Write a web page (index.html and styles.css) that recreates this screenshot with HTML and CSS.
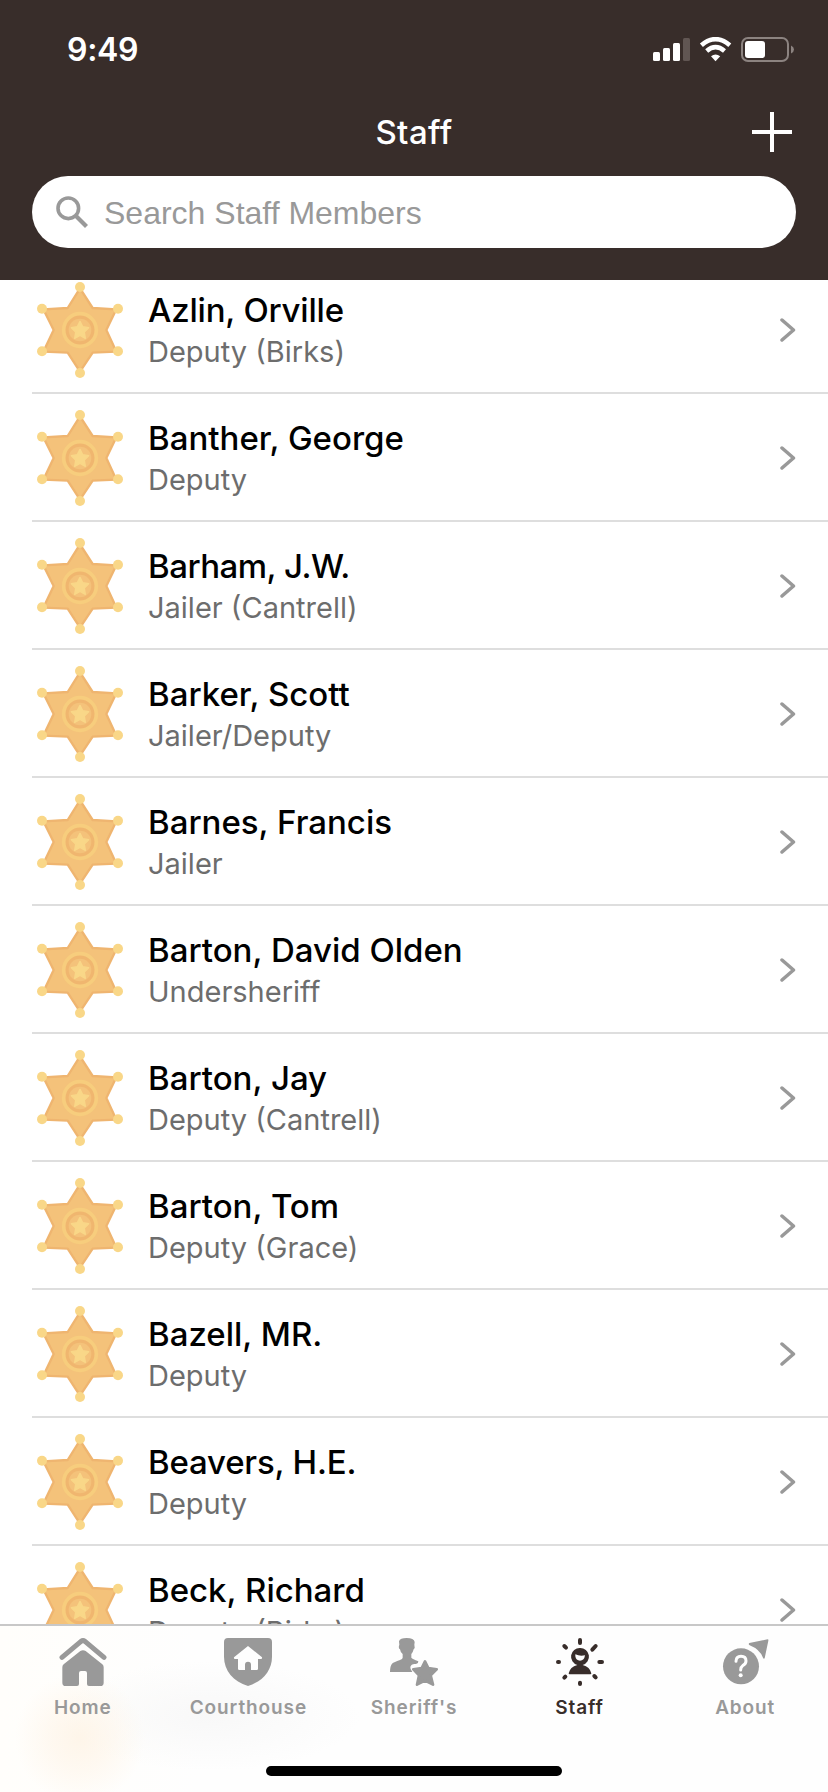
FILE: index.html
```html
<!DOCTYPE html>
<html lang="en">
<head>
<meta charset="utf-8">
<title>Staff</title>
<link rel="stylesheet" href="styles.css">
</head>
<body>
<svg class="defs" aria-hidden="true">
  <symbol id="badge" viewBox="45 15 270 300">
    <path d="M180 40 218 99 289 103 259 165 289 230 218 233 180 290 143 233 70 230 101 165 70 103 143 99Z" fill="#f4c27a" stroke="#efb570" stroke-width="7" stroke-linejoin="round"/>
    <g fill="#f9d788">
      <circle cx="180" cy="36" r="15"/><circle cx="294" cy="101" r="15"/><circle cx="294" cy="229" r="15"/>
      <circle cx="180" cy="294" r="15"/><circle cx="66" cy="229" r="15"/><circle cx="66" cy="101" r="15"/>
    </g>
    <circle cx="180" cy="165" r="49" fill="#f0b66f" stroke="#f7cd7d" stroke-width="11"/>
    <circle cx="180" cy="165" r="34" fill="#f4c27a"/>
    <path d="M180 139 188 155 206 158 193 171 196 190 180 181 164 190 167 171 154 158 172 155Z" fill="#f9d788" stroke="#f9d788" stroke-width="4" stroke-linejoin="round"/>
  </symbol>
  <symbol id="chevron" viewBox="0 0 16 26">
    <path d="M2 3 13.5 13 2 23" fill="none" stroke="#999" stroke-width="3.5" stroke-linecap="round" stroke-linejoin="round"/>
  </symbol>
</svg>
<div class="app">
  <header class="header">
    <div class="status">
      <span class="time">9:49</span>
      <svg class="status-icons" viewBox="0 0 142 26">
        <g fill="#fff">
          <rect x="0" y="15" width="7" height="9" rx="1.5"/><rect x="10" y="11" width="7" height="13" rx="1.5"/>
          <rect x="20" y="6" width="7" height="18" rx="1.5"/><rect x="30" y="1" width="7" height="23" rx="1.5" fill="#615653"/>
        </g>
        <g fill="none" stroke="#fff" stroke-width="4.6">
          <path d="M48.4 8.2Q62.5 -3.8 76.8 8.2"/><path d="M53.7 14Q62.5 6.4 71.5 14"/>
        </g>
        <path d="M58 19.3Q62.5 15.6 67.200 19.3L62.500 24.200Z" fill="#fff"/>
        <rect x="89" y="1" width="46" height="23" rx="6" fill="none" stroke="#8c8380" stroke-width="2"/>
        <rect x="92" y="4" width="20" height="17" rx="3" fill="#fff"/>
        <path d="M138 8.500Q141 10 141 12.500T138 16.500Z" fill="#8c8380"/>
      </svg>
    </div>
    <div class="titlebar">
      <h1 class="title">Staff</h1>
      <svg class="add" viewBox="0 0 40 40"><path d="M20 2V38M2 20H38" stroke="#fff" stroke-width="4" stroke-linecap="square"/></svg>
    </div>
    <div class="search">
      <svg class="search-icon" viewBox="0 0 32 32"><circle cx="12.300" cy="12.300" r="10.300" fill="none" stroke="#999" stroke-width="3.600"/><path d="M20 20 30.500 30.500" stroke="#999" stroke-width="4.200"/></svg>
      <span class="placeholder">Search Staff Members</span>
    </div>
  </header>
  <main class="list">
    <div class="row"><svg class="badge"><use href="#badge"/></svg><div class="entry"><div class="name snug">Azlin, Orville</div><div class="role">Deputy (Birks)</div></div><svg class="chevron"><use href="#chevron"/></svg></div>
    <div class="row"><svg class="badge"><use href="#badge"/></svg><div class="entry"><div class="name">Banther, George</div><div class="role">Deputy</div></div><svg class="chevron"><use href="#chevron"/></svg></div>
    <div class="row"><svg class="badge"><use href="#badge"/></svg><div class="entry"><div class="name tight">Barham, J.W.</div><div class="role">Jailer (Cantrell)</div></div><svg class="chevron"><use href="#chevron"/></svg></div>
    <div class="row"><svg class="badge"><use href="#badge"/></svg><div class="entry"><div class="name">Barker, Scott</div><div class="role">Jailer/Deputy</div></div><svg class="chevron"><use href="#chevron"/></svg></div>
    <div class="row"><svg class="badge"><use href="#badge"/></svg><div class="entry"><div class="name">Barnes, Francis</div><div class="role">Jailer</div></div><svg class="chevron"><use href="#chevron"/></svg></div>
    <div class="row"><svg class="badge"><use href="#badge"/></svg><div class="entry"><div class="name">Barton, David Olden</div><div class="role">Undersheriff</div></div><svg class="chevron"><use href="#chevron"/></svg></div>
    <div class="row"><svg class="badge"><use href="#badge"/></svg><div class="entry"><div class="name">Barton, Jay</div><div class="role">Deputy (Cantrell)</div></div><svg class="chevron"><use href="#chevron"/></svg></div>
    <div class="row"><svg class="badge"><use href="#badge"/></svg><div class="entry"><div class="name">Barton, Tom</div><div class="role">Deputy (Grace)</div></div><svg class="chevron"><use href="#chevron"/></svg></div>
    <div class="row"><svg class="badge"><use href="#badge"/></svg><div class="entry"><div class="name">Bazell, MR.</div><div class="role">Deputy</div></div><svg class="chevron"><use href="#chevron"/></svg></div>
    <div class="row"><svg class="badge"><use href="#badge"/></svg><div class="entry"><div class="name snug">Beavers, H.E.</div><div class="role">Deputy</div></div><svg class="chevron"><use href="#chevron"/></svg></div>
    <div class="row"><svg class="badge"><use href="#badge"/></svg><div class="entry"><div class="name">Beck, Richard</div><div class="role">Deputy (Birks)</div></div><svg class="chevron"><use href="#chevron"/></svg></div>
  </main>
  <nav class="tabbar">
    <div class="tab">
      <svg class="tab-icon" viewBox="174 294 144 144"><path d="M183 352 240 304Q246 300 252 304L309 352" fill="none" stroke="currentColor" stroke-width="15" stroke-linecap="round" stroke-linejoin="round"/><path d="M184 382Q184 376 188 373L238 333Q246 328 254 333L304 373Q308 376 308 382V428Q308 438 298 438H264Q258 438 258 432V399Q258 393 252 393H240Q234 393 234 399V432Q234 438 228 438H194Q184 438 184 428Z"/></svg>
      <span>Home</span>
    </div>
    <div class="tab">
      <svg class="tab-icon" viewBox="672 294 144 144"><path fill-rule="evenodd" d="M684 294H804Q816 294 816 306V350C816 392 788 424 744 438C700 424 672 392 672 350V306Q672 294 684 294ZM744 318 702 352Q701 357 705 357H714V386Q714 390 718 390H735V374A9 9 0 0 1 753 374V390H770Q774 390 774 386V357H783Q787 357 786 352Z"/></svg>
      <span>Courthouse</span>
    </div>
    <div class="tab">
      <svg class="tab-icon" viewBox="60 54 144 144"><path d="M87 64Q90 54 110 54 132 54 134 66L133 74Q136 84 131 88 129 97 124 102V113Q127 117 145 124 146 130 138 132 124 130 121 141 120 148 127 156H60Q60 138 66 131 72 126 90 120 98 117 98 113V102Q91 97 90 88 84 84 88 74Z"/><path d="M165 124 175 144 200 148 182 166 189 194 165 182 141 194 147 166 130 148 155 144Z" stroke="currentColor" stroke-width="8" stroke-linejoin="round"/></svg>
      <span>Sheriff's</span>
    </div>
    <div class="tab active">
      <svg class="tab-icon" viewBox="558 54 144 144"><path d="M630 60V69M583 78 588 83M677 78 667 89M564 126H567M688 126H696M583 173 586 170M673 168 677 172M630 188V192" stroke="currentColor" stroke-width="12" stroke-linecap="round"/><path fill-rule="evenodd" d="M630 84A26 26 0 0 1 638 135Q660 141 664 160 664 163 661 163H599Q596 163 596 160 600 141 622 135A26 26 0 0 1 630 84ZM616 103V109Q618 122 630 122 643 122 645 106 630 110 616 103Z"/></svg>
      <span>Staff</span>
    </div>
    <div class="tab">
      <svg class="tab-icon" viewBox="244 54 144 144"><circle cx="304" cy="139" r="54"/><path d="M289 124Q289 109 304 109 319 109 319 123 319 132 309 137 303 141 303 150" fill="none" stroke="#fff" stroke-width="9" stroke-linecap="round"/><circle cx="303" cy="166" r="6" fill="#fff"/><path d="M329 69 384 58Q387 58 386 62L375 115Q372 118 370 113 360 88 330 76 325 72 329 69Z"/></svg>
      <span>About</span>
    </div>
    <div class="home-indicator"></div>
  </nav>
</div>
</body>
</html>
```
FILE: styles.css
```css
* { box-sizing: border-box; }
body {
  margin: 0;
  background: #fff;
  font-family: Inter, "Liberation Sans", sans-serif;
}
.defs { position: absolute; width: 0; height: 0; }
.app {
  position: relative;
  display: flex;
  flex-direction: column;
  width: 828px;
  height: 1792px;
  overflow: hidden;
}
.header {
  flex: none;
  height: 280px;
  padding: 0 32px;
  background: #382d2a;
  color: #fff;
}
.status {
  display: flex;
  justify-content: space-between;
  align-items: center;
  height: 100px;
  padding: 0 1px 0 35px;
}
.time { font-size: 32px; font-weight: 600; line-height: 40px; letter-spacing: -0.3px; }
.status-icons { width: 142px; height: 26px; }
.titlebar {
  display: grid;
  grid-template-columns: 40px 1fr 40px;
  align-items: center;
  height: 64px;
  padding: 0 4px;
}
.title { grid-column: 2; margin: 0; text-align: center; font-size: 33px; font-weight: 500; line-height: 40px; letter-spacing: 0.4px; }
.add { width: 40px; height: 40px; }
.search {
  display: flex;
  align-items: center;
  gap: 16px;
  height: 72px;
  margin-top: 12px;
  padding-left: 24px;
  border-radius: 36px;
  background: #fff;
}
.search-icon { width: 32px; height: 32px; }
.placeholder { padding-top: 2px; color: #999; font: 32px/40px "Liberation Sans", sans-serif; }
.list { flex: 1; min-height: 0; overflow: hidden; padding-left: 32px; }
.row {
  display: flex;
  align-items: center;
  height: 128px;
  padding: 2px 32px 0 3px;
  border-bottom: 2px solid #dedede;
}
.row:first-child { margin-top: -14px; }
.badge { flex: none; width: 90px; height: 100px; }
.entry { flex: 1; padding: 1px 0 0 23px; white-space: nowrap; }
.name { color: #000; font-size: 33px; font-weight: 500; line-height: 42px; }
.name.snug { letter-spacing: -0.2px; }
.name.tight { letter-spacing: -0.5px; }
.role { color: #6d6d6d; font-size: 29px; line-height: 41px; }
.chevron { width: 16px; height: 26px; }
.tabbar {
  position: absolute;
  inset: auto 0 0 0;
  display: grid;
  grid-template-columns: repeat(5, 1fr);
  align-content: space-between;
  height: 168px;
  padding: 12px 0 16px;
  border-top: 2px solid #c8c8c8;
  background:
    radial-gradient(circle at 80px 112px, #fef5e9 0, #fef5e999 30px, #fef5e900 65px),
    radial-gradient(ellipse 150px 55px at 210px 90px, #f8f8f8 0, #f8f8f800 100%),
    linear-gradient(90deg, #fffefb 0, #fefefe 200px);
}
.tab {
  display: flex;
  flex-direction: column;
  align-items: center;
  gap: 10px;
  color: #999;
  fill: currentColor;
  font-size: 19px;
  font-weight: 600;
  line-height: 24px;
  letter-spacing: 0.9px;
}
.tab.active { color: #382d2a; }
.tab-icon { width: 48px; height: 48px; }
.home-indicator { grid-column: 1 / -1; justify-self: center; width: 296px; height: 10px; border-radius: 5px; background: #000; }
```
